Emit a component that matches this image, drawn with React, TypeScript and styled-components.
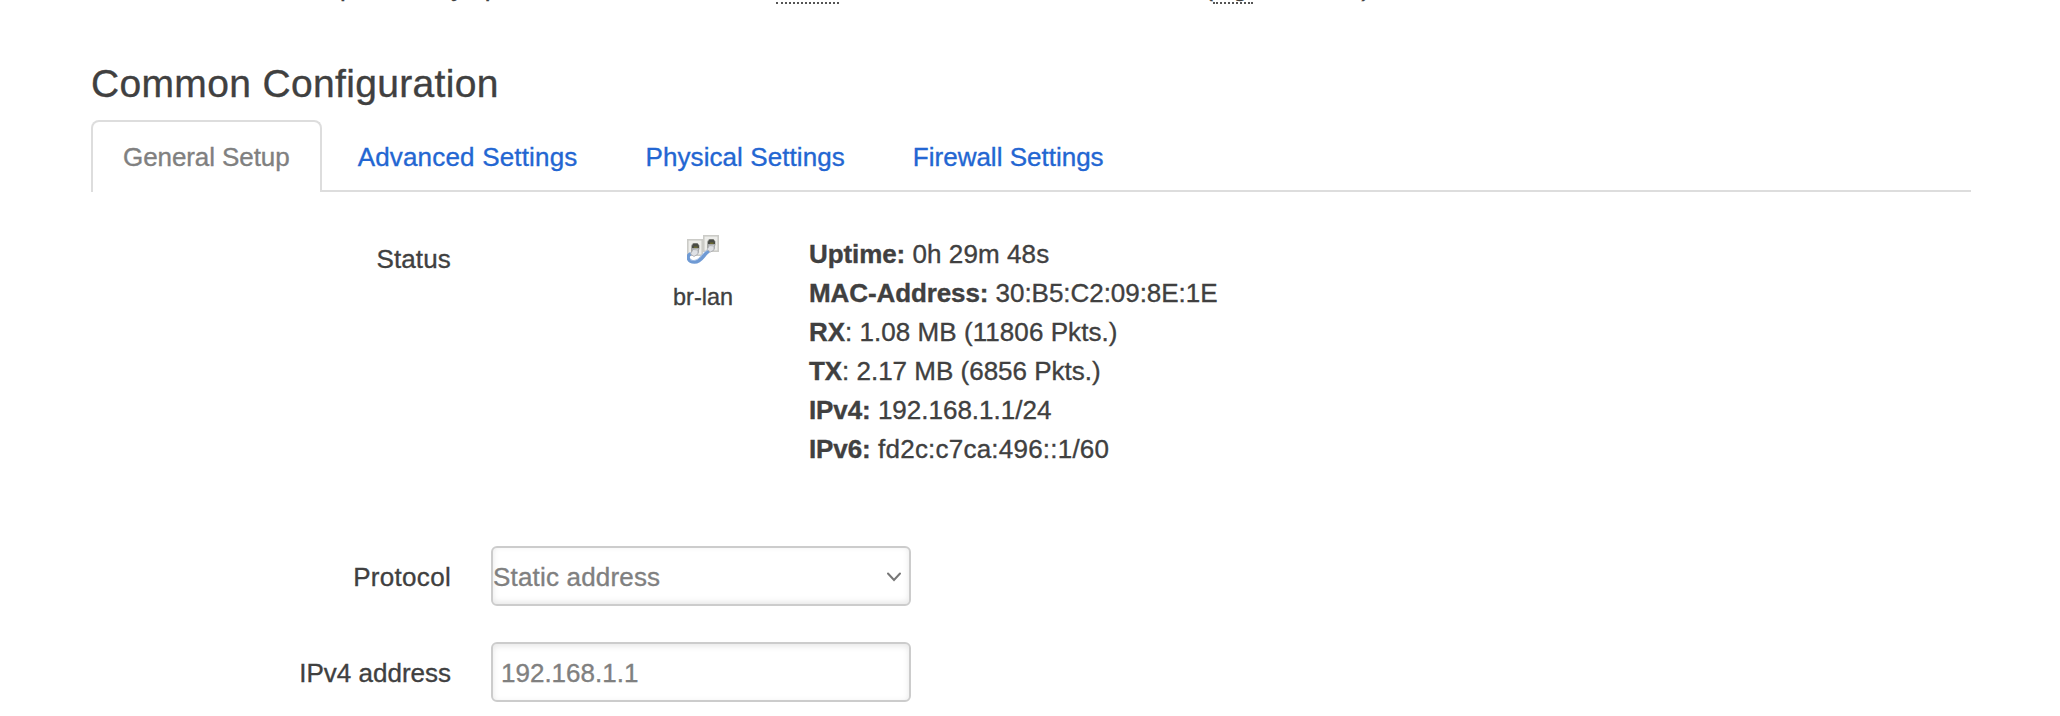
import React from 'react';
import styled, { createGlobalStyle } from 'styled-components';

const GlobalStyle = createGlobalStyle`
  body { margin: 0; background: #fff; overflow: hidden; }
  * { box-sizing: border-box; }
`;

const Page = styled.main`
  height: 716px;
  overflow: hidden;
  padding: 0 89px 0 91px;
  font: 26px/36px "Liberation Sans", Arial, sans-serif;
  color: #404040;
  -webkit-text-stroke: 0.35px currentColor;
`;

const Description = styled.p`
  margin: -31px 0 0;
  height: 36px;
  white-space: nowrap;
  letter-spacing: 0.155px;
`;

const Abbr = styled.abbr<{ $spacing: number }>`
  text-decoration: none;
  border-bottom: 2px dotted #555;
  letter-spacing: ${(p) => p.$spacing}px;
`;

const Sample = styled.samp`
  font-family: "Liberation Mono", monospace;
  font-size: 26px;
  letter-spacing: 0;
`;

const Legend = styled.h3`
  margin: 43px 0 0;
  font-size: 39px;
  font-weight: 400;
  line-height: 72px;
  height: 72px;
  letter-spacing: 0.34px;
`;

const Tabs = styled.ul`
  display: flex;
  gap: 4px;
  list-style: none;
  margin: 0;
  padding: 0;
  height: 72px;
  border-bottom: 2px solid #ddd;
`;

const Tab = styled.li<{ $active?: boolean; $spacing: number }>`
  height: ${(p) => (p.$active ? '72px' : '70px')};
  padding: 0 30px;
  line-height: 71px;
  border: 2px solid ${(p) => (p.$active ? '#ddd' : 'transparent')};
  border-bottom: 0;
  border-radius: 8px 8px 0 0;
  background: ${(p) => (p.$active ? '#fff' : 'transparent')};
  color: ${(p) => (p.$active ? '#808080' : '#2366d2')};
  letter-spacing: ${(p) => p.$spacing}px;
`;

const Row = styled.div<{ $height: number }>`
  display: flex;
  gap: 40px;
  height: ${(p) => p.$height}px;
`;

const Label = styled.label<{ $spacing?: number }>`
  width: 360px;
  text-align: right;
  line-height: 62px;
  letter-spacing: ${(p) => p.$spacing ?? 0}px;
`;

const StatusLabel = styled(Label)`
  padding-top: 36px;
`;

const Status = styled.div`
  display: flex;
`;

const Device = styled.div`
  width: 160px;
  margin-left: 132px;
  padding-top: 43px;
  display: flex;
  flex-direction: column;
  align-items: center;
  gap: 12px;
  font-size: 23.4px;
  line-height: 40px;
`;

const Details = styled.div`
  margin-left: 26px;
  padding-top: 43px;
  line-height: 39px;
  white-space: nowrap;
`;

const Detail = styled.div<{ $spacing: number }>`
  letter-spacing: ${(p) => p.$spacing}px;

  strong {
    letter-spacing: -0.1px;
  }
`;

const Field = styled.div<{ $inset: number; $shadow: number; $spacing?: number }>`
  display: flex;
  align-items: center;
  justify-content: space-between;
  width: 420px;
  height: 60px;
  padding: 1px 8px 0 ${(p) => p.$inset}px;
  border: 2px solid #ccc;
  border-radius: 6px;
  color: #808080;
  letter-spacing: ${(p) => p.$spacing ?? 0}px;
  box-shadow: inset 0 ${(p) => p.$shadow}px 6px rgba(0, 0, 0, 0.1);
`;

const tabs = [
  { name: 'General Setup', spacing: -0.08 },
  { name: 'Advanced Settings', spacing: 0.18 },
  { name: 'Physical Settings', spacing: 0.08 },
  { name: 'Firewall Settings', spacing: 0 },
];

const details = [
  { name: 'Uptime:', value: ' 0h 29m 48s', spacing: 0.1 },
  { name: 'MAC-Address:', value: ' 30:B5:C2:09:8E:1E', spacing: -0.04 },
  { name: 'RX', value: ': 1.08 MB (11806 Pkts.)', spacing: 0.06 },
  { name: 'TX', value: ': 2.17 MB (6856 Pkts.)', spacing: 0 },
  { name: 'IPv4:', value: ' 192.168.1.1/24', spacing: 0 },
  { name: 'IPv6:', value: ' fd2c:c7ca:496::1/60', spacing: 0.22 },
];

const WallPlate = ({ x, y }: { x: number; y: number }) => (
  <g transform={`translate(${x} ${y})`}>
    <rect x="0.8" y="0.8" width="14.4" height="15.4" fill="#ededea" stroke="#cbcbc7" strokeWidth="1.6" />
    <path d="M4 13V6.500L6 4h4.500l2 2.500V10l-2 3z" fill="#a6a7a3" />
    <path d="M5 9V6.500L6.500 4.500h4L12 6.500V9z" fill="#4a4c46" />
    <path d="M7 7.500h3.500V9H7z" fill="#6b6a30" />
    <path d="M6 9.500h5.500v4L8 15.500 5 13z" fill="#e2e3e5" stroke="#a0a2a5" strokeWidth="0.8" />
  </g>
);

const BridgeIcon = () => (
  <svg width="32" height="30" viewBox="0 0 32 30">
    <WallPlate x={0} y={4} />
    <WallPlate x={16} y={0} />
    <path d="M4 18.500C-1 21 1 27 7.500 27 15 27 16 19.500 22 16" fill="none" stroke="#6f9ad4" strokeWidth="3.400" />
    <path d="M3 24.500C6 26.500 10 25.500 13 22s5-5.500 8-7" fill="none" stroke="#a3c0e8" strokeWidth="1" />
    <path d="m3.500 19 2.500-4.500 5 .5v4l-4 2.500z" fill="#dfe1e5" stroke="#a4a7ac" strokeWidth="0.8" />
    <path d="m20 14.500 2.500-4 4.500.5v4l-3.500 2z" fill="#dfe1e5" stroke="#a4a7ac" strokeWidth="0.8" />
  </svg>
);

const Chevron = () => (
  <svg width="14" height="10" viewBox="0 0 14 10" fill="none" stroke="#777" strokeWidth="2" strokeLinecap="round">
    <path d="m1 1.500 6 6.500 6-6.500" />
  </svg>
);

export default function App() {
  return (
    <Page>
      <GlobalStyle />
      <Description>
        network interfaces separated by spaces. You can also use <Abbr $spacing={-1.4}>VLAN</Abbr> notation{' '}
        <Sample>INTERFACE.VLANNR</Sample> (<Abbr $spacing={-0.8}>e.g.</Abbr>: <Sample>eth0.1</Sample>).
      </Description>
      <Legend>Common Configuration</Legend>
      <Tabs>
        {tabs.map((tab, i) => (
          <Tab key={tab.name} $active={i === 0} $spacing={tab.spacing}>{tab.name}</Tab>
        ))}
      </Tabs>
      <Row $height={354}>
        <StatusLabel $spacing={0.15}>Status</StatusLabel>
        <Status>
          <Device>
            <BridgeIcon />
            <span>br-lan</span>
          </Device>
          <Details>
            {details.map((d) => (
              <Detail key={d.name} $spacing={d.spacing}>
                <strong>{d.name}</strong>
                {d.value}
              </Detail>
            ))}
          </Details>
        </Status>
      </Row>
      <Row $height={96}>
        <Label $spacing={0.3}>Protocol</Label>
        <Field $inset={0} $shadow={-2} $spacing={0.18}>
          Static address
          <Chevron />
        </Field>
      </Row>
      <Row $height={74}>
        <Label>IPv4 address</Label>
        <Field $inset={8} $shadow={2}>192.168.1.1</Field>
      </Row>
    </Page>
  );
}
